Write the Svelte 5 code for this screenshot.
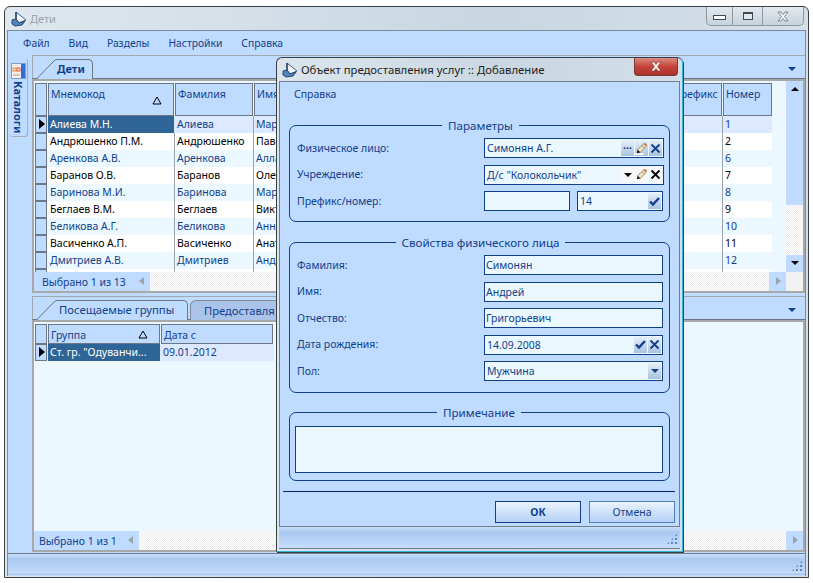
<script>
	const rows = [
		['Алиева М.Н.', 'Алиева', 'Мария', '1'],
		['Андрюшенко П.М.', 'Андрюшенко', 'Павел', '2'],
		['Аренкова А.В.', 'Аренкова', 'Алла', '6'],
		['Баранов О.В.', 'Баранов', 'Олег', '7'],
		['Баринова М.И.', 'Баринова', 'Мария', '8'],
		['Беглаев В.М.', 'Беглаев', 'Виктор', '9'],
		['Беликова А.Г.', 'Беликова', 'Анна', '10'],
		['Васиченко А.П.', 'Васиченко', 'Анатолий', '11'],
		['Дмитриев А.В.', 'Дмитриев', 'Андрей', '12'],
		['', '', '', '']
	];
	const menu = ['Файл', 'Вид', 'Разделы', 'Настройки', 'Справка'];
	const person = [
		['Фамилия:', 'Симонян'],
		['Имя:', 'Андрей'],
		['Отчество:', 'Григорьевич']
	];
</script>

{#snippet logo()}
	<svg class="logo" width="16" height="16" viewBox="0 0 16 16">
		<path d="M5 1 L15 9 L8 12 L5 8 Z" fill="#f2f6fb" stroke="#3d5f8c" />
		<path d="M5 1 V8" stroke="#24406b" stroke-width="1.4" />
		<path d="M1 9 L5 8 L8 12 L14 10 L11 14 L4 15 L1 13 Z" fill="#4f86be" stroke="#2b4468" />
	</svg>
{/snippet}

{#snippet slant()}
	<svg class="slant" width="20" height="20" viewBox="0 0 20 20">
		<path d="M0 20 L16 3 Q18 0 20 0 L20 20 Z" fill="#bfdbff" />
		<path d="M0 19.5 L16 3 Q18 .5 20 .5" fill="none" stroke="#6d7780" />
	</svg>
{/snippet}

{#snippet sort()}
	<svg class="sort" width="10" height="9" viewBox="0 0 10 9">
		<path d="M5 1 L9 8 H1 Z" fill="none" stroke="#000" />
	</svg>
{/snippet}

{#snippet pencil()}
	<svg class="ico" width="15" height="15" viewBox="0 0 15 15">
		<path d="M0 13 H10 V15 H0 Z" fill="#fff" />
		<path d="M3 9 L10 2 L13 5 L6 12 Z" fill="#f1e2c2" stroke="#8a6a3a" stroke-width=".8" />
		<path d="M10 2 L11.5 1 L14 3.5 L13 5 Z" fill="#e0703a" />
		<path d="M8 4 L11 7" stroke="#5f86c0" />
		<path d="M3 9 L6 12 L2 13 Z" fill="#111" />
	</svg>
{/snippet}

{#snippet cross(color)}
	<svg class="ico" width="11" height="11" viewBox="0 0 11 11">
		<path d="M1.5 1.5 L9.5 9.5 M9.5 1.5 L1.5 9.5" stroke={color} stroke-width="1.8" />
	</svg>
{/snippet}

{#snippet check()}
	<svg class="ico" width="11" height="9" viewBox="0 0 11 9">
		<path d="M1 4.5 L4 7.5 L10 1" fill="none" stroke="#123f8c" stroke-width="2.4" />
	</svg>
{/snippet}

<div class="window">
	<header class="titlebar">
		{@render logo()}
		<span class="title">Дети</span>
		<div class="controls">
			<span class="ctl min"><i></i></span>
			<span class="ctl max"><i></i></span>
			<span class="ctl close">
				<svg width="14" height="11" viewBox="0 0 14 11">
					<path d="M2 1 H5 L7 3.5 L9 1 H12 L8.5 5.5 L12 10 H9 L7 7.5 L5 10 H2 L5.5 5.5 Z" fill="#f4f6f8" stroke="#7c858c" />
				</svg>
			</span>
		</div>
	</header>

	<div class="client">
		<nav class="menu">
			{#each menu as item}
				<span>{item}</span>
			{/each}
		</nav>

		<div class="body">
			<aside class="side">
				<div class="side-tab">
					<svg width="15" height="16" viewBox="0 0 15 16">
						<rect x=".5" y=".5" width="14" height="15" fill="#2f6fd6" stroke="#7f9fd0" />
						<rect x="1" y="1" width="9" height="14" fill="#f4efe9" />
						<rect x="2" y="5" width="3" height="3" fill="none" stroke="#f08a2c" />
						<rect x="6" y="5" width="3" height="3" fill="none" stroke="#e8583a" />
						<rect x="2" y="11" width="7" height="2" fill="#d8c4b0" />
					</svg>
					<span class="side-label">Каталоги</span>
				</div>
			</aside>

			<main class="panes">
				<section class="pane top">
					<div class="tabstrip">
						<div class="tab">
							{@render slant()}
							<b>Дети</b>
						</div>
						<span class="strip-arrow"></span>
					</div>
					<div class="sheet">
						<div class="grid-area">
							<div class="grid">
								<div class="hrow tall">
									<span class="ind"></span>
									<span class="hcell c-mnem">Мнемокод{@render sort()}</span>
									<span class="hcell c-fam">Фамилия</span>
									<span class="hcell c-name">Имя</span>
									<span class="hcell c-pref">Префикс</span>
									<span class="hcell c-num">Номер</span>
								</div>
								{#each rows as row, i}
									<div class="row" class:alt={i % 2 === 0} class:first={i === 0}>
										<span class="ind">{#if i === 0}<u></u>{/if}</span>
										<span class="cell c-mnem" class:sel={i === 0}>{row[0]}</span>
										<span class="cell c-fam">{row[1]}</span>
										<span class="cell c-name">{row[2]}</span>
										<span class="cell c-pref"></span>
										<span class="cell c-num">{row[3]}</span>
									</div>
								{/each}
							</div>
							<div class="vscroll">
								<div class="vthumb"><span class="up"></span></div>
								<div class="vtrack"></div>
								<div class="vbtn"><span class="down"></span></div>
							</div>
						</div>
						<div class="footer">
							<div class="count wide">Выбрано 1 из 13<span class="left"></span></div>
							<div class="hatch"></div>
							<div class="hbtn"><span class="right"></span></div>
							<div class="corner"></div>
						</div>
					</div>
				</section>

				<div class="split"></div>

				<section class="pane bottom">
					<div class="tabstrip low">
						<div class="tab long">
							{@render slant()}
							<b>Посещаемые группы</b>
						</div>
						<div class="tab off">Предоставля</div>
						<span class="strip-arrow"></span>
					</div>
					<div class="sheet grow">
						<div class="grid small">
							<div class="hrow">
								<span class="ind"></span>
								<span class="hcell c-group">Группа{@render sort()}</span>
								<span class="hcell c-date">Дата с</span>
							</div>
							<div class="row alt first">
								<span class="ind"><u></u></span>
								<span class="cell c-group sel">Ст. гр. "Одуванчи...</span>
								<span class="cell c-date">09.01.2012</span>
							</div>
						</div>
						<div class="footer">
							<div class="count">Выбрано 1 из 1<span class="left"></span></div>
							<div class="hatch"></div>
							<div class="hbtn"><span class="right"></span></div>
						</div>
					</div>
				</section>
			</main>
		</div>

		<footer class="statusbar">
			<span class="grip"></span>
		</footer>
	</div>

	<div class="dialog">
		<header class="dlg-title">
			{@render logo()}
			<span>Объект предоставления услуг :: Добавление</span>
			<div class="dlg-close">
				<svg width="14" height="11" viewBox="0 0 14 11">
					<path d="M2 1 H5 L7 3.5 L9 1 H12 L8.5 5.5 L12 10 H9 L7 7.5 L5 10 H2 L5.5 5.5 Z" fill="#fff" stroke="#8c3a30" stroke-width=".7" />
				</svg>
			</div>
		</header>
		<div class="dlg-body">
			<div class="dlg-menu">Справка</div>

			<fieldset class="params">
				<legend>Параметры</legend>
				<div class="line">
					<label>Физическое лицо:</label>
					<div class="input">
						<span class="val">Симонян А.Г.</span>
						<span class="btn shade dots">···</span>
						<span class="btn shade">{@render pencil()}</span>
						<span class="btn shade">{@render cross('#123f8c')}</span>
					</div>
				</div>
				<div class="line">
					<label>Учреждение:</label>
					<div class="input">
						<span class="val">Д/с "Колокольчик"</span>
						<span class="btn"><span class="drop dark"></span></span>
						<span class="btn">{@render pencil()}</span>
						<span class="btn">{@render cross('#000')}</span>
					</div>
				</div>
				<div class="line">
					<label>Префикс/номер:</label>
					<div class="split-input">
						<div class="input prefix"></div>
						<div class="input number">
							<span class="val">14</span>
							<span class="btn shade">{@render check()}</span>
						</div>
					</div>
				</div>
			</fieldset>

			<fieldset class="props">
				<legend>Свойства физического лица</legend>
				{#each person as p}
					<div class="line">
						<label>{p[0]}</label>
						<div class="input plain"><span class="val">{p[1]}</span></div>
					</div>
				{/each}
				<div class="line">
					<label>Дата рождения:</label>
					<div class="input">
						<span class="val">14.09.2008</span>
						<span class="btn shade">{@render check()}</span>
						<span class="btn shade">{@render cross('#123f8c')}</span>
					</div>
				</div>
				<div class="line">
					<label>Пол:</label>
					<div class="input">
						<span class="val">Мужчина</span>
						<span class="btn shade"><span class="drop"></span></span>
					</div>
				</div>
			</fieldset>

			<fieldset class="note">
				<legend>Примечание</legend>
				<div class="memo"></div>
			</fieldset>

			<div class="rule"></div>

			<div class="actions">
				<button class="ok">ОК</button>
				<button class="cancel">Отмена</button>
			</div>
		</div>
		<footer class="dlg-status"><span class="grip"></span></footer>
	</div>
</div>

<style>
	:global(body) {
		margin: 0;
		background: #fff;
	}

	.window {
		position: relative;
		box-sizing: border-box;
		width: 805px;
		height: 572px;
		margin: 6px 0 0 4px;
		display: flex;
		flex-direction: column;
		border: 1px solid #3a3f44;
		border-radius: 6px 6px 0 0;
		background: linear-gradient(90deg, #dfe7ee, #c9d7e2 60%, #d5dfe8);
		font: 10.5px "Noto Sans", sans-serif;
		color: #123f8c;
	}

	.titlebar {
		height: 23px;
		flex: none;
		display: flex;
		align-items: center;
		padding-left: 6px;
		gap: 3px;
	}

	.logo {
		flex: none;
	}

	.title {
		color: #9aa4ad;
		font-size: 11px;
	}

	.controls {
		margin-left: auto;
		margin-right: 4px;
		align-self: flex-start;
		display: flex;
		height: 18px;
		border: 1px solid #8d979f;
		border-top: none;
		border-radius: 0 0 5px 5px;
		background: linear-gradient(#e3e9ee, #c7d2db);
	}

	.ctl {
		display: flex;
		align-items: center;
		justify-content: center;
		border-right: 1px solid #8d979f;
		width: 25px;
	}

	.ctl.max {
		width: 29px;
	}

	.ctl.close {
		width: 40px;
		border-right: none;
	}

	.min i {
		width: 11px;
		height: 3px;
		margin-top: 3px;
		border: 1px solid #3d4a55;
		background: #fff;
	}

	.max i {
		width: 8px;
		height: 5px;
		border: 1px solid #3d4a55;
		border-top-width: 2px;
		background: #dfe6ec;
	}

	.client {
		flex: 1;
		min-height: 0;
		margin: 0 2px 1px;
		display: flex;
		flex-direction: column;
		background: #bfdbff;
		border: 1px solid #7b8b99;
		border-bottom: none;
		padding-bottom: 1px;
	}

	.menu {
		height: 24px;
		flex: none;
		display: flex;
		align-items: center;
		gap: 19px;
		padding-left: 15px;
		font-size: 10.3px;
	}

	.body {
		flex: 1;
		min-height: 0;
		display: flex;
	}

	.side {
		width: 24px;
		flex: none;
		padding: 4px 0 0 2px;
		box-sizing: border-box;
	}

	.side-tab {
		width: 18px;
		height: 78px;
		box-sizing: border-box;
		border: 1px solid #a5adb5;
		border-left: none;
		border-top: none;
		border-radius: 3px;
		display: flex;
		flex-direction: column;
		align-items: center;
		padding-top: 4px;
		gap: 2px;
	}

	.side-label {
		writing-mode: vertical-rl;
		font-weight: bold;
		font-size: 11px;
	}

	.panes {
		flex: 1;
		min-width: 0;
		display: flex;
		flex-direction: column;
	}

	.pane {
		display: flex;
		flex-direction: column;
	}

	.pane.top {
		height: 238px;
		flex: none;
	}

	.pane.bottom {
		flex: 1;
		min-height: 0;
		margin-bottom: 1px;
	}

	.tabstrip {
		height: 24px;
		flex: none;
		position: relative;
		display: flex;
		align-items: flex-end;
		box-sizing: border-box;
		border-top: 1px solid #a0a8b0;
		border-bottom: 1px solid #687480;
		border-left: 1px solid #a0a8b0;
		padding-left: 4px;
	}

	.tab {
		height: 20px;
		margin-bottom: -1px;
		display: flex;
		align-items: center;
		position: relative;
		z-index: 1;
	}

	.tab b {
		box-sizing: border-box;
		width: 36px;
		height: 20px;
		line-height: 18px;
		font-size: 11px;
		background: #bfdbff;
		border: 1px solid #6d7780;
		border-left: none;
		border-bottom: none;
		border-radius: 0 5px 0 0;
	}

	.tab.long b {
		width: 131px;
		font-weight: normal;
		padding-left: 2px;
		font-size: 11.3px;
		white-space: nowrap;
	}

	.tab.off {
		box-sizing: border-box;
		width: 200px;
		padding-left: 13px;
		margin-left: 2px;
		background: #a9c4e8;
		border: 1px solid #7d8b99;
		border-bottom: none;
		border-radius: 6px 5px 0 0;
		white-space: nowrap;
		font-size: 11.2px;
	}

	.strip-arrow {
		position: absolute;
		right: 9px;
		top: 11px;
		border: 4px solid transparent;
		border-top: 4px solid #123f8c;
		border-bottom-width: 0;
	}

	.sheet {
		flex: 1;
		min-height: 0;
		display: flex;
		flex-direction: column;
		box-sizing: border-box;
		border: 2px solid #a6a8aa;
		background: #ebf8ff;
	}

	.grid-area {
		flex: 1;
		min-height: 0;
		display: flex;
		overflow: hidden;
	}

	.grid {
		flex: 1;
		min-width: 0;
		overflow: hidden;
		padding: 2px 0 0 1px;
	}

	.hrow {
		height: 20px;
		display: flex;
	}

	.hrow.tall {
		height: 33px;
	}

	.ind {
		box-sizing: border-box;
		width: 12px;
		flex: none;
		margin-right: 1px;
		background: #bfdbff;
		border: 1px solid #6b7784;
		position: relative;
	}

	.ind u {
		position: absolute;
		left: 3px;
		top: 2px;
		border: 5px solid transparent;
		border-left: 6px solid #000;
		border-right: none;
	}

	.hcell {
		box-sizing: border-box;
		flex: none;
		position: relative;
		margin-right: 1px;
		padding: 3px 0 0 2px;
		background: #bfdbff;
		border: 1px solid #6b7784;
		white-space: nowrap;
		overflow: hidden;
	}

	.sort {
		position: absolute;
		right: 11px;
		bottom: 10px;
	}

	.small .sort {
		bottom: 4px;
	}

	.c-mnem {
		width: 126px;
	}

	.c-fam {
		width: 78px;
	}

	.c-name {
		width: 415px;
	}

	.c-pref {
		width: 52px;
	}

	.c-num {
		width: 49px;
	}

	.c-group {
		width: 112px;
	}

	.c-date {
		width: 112px;
	}

	.row {
		height: 17px;
		width: max-content;
		display: flex;
		background: #fff;
		color: #000;
	}

	.row.alt {
		background: #ebf8ff;
		color: #123f8c;
	}

	.row.first {
		background: #dce9ff;
	}

	.cell {
		box-sizing: border-box;
		flex: none;
		height: 17px;
		line-height: 16px;
		padding-left: 2px;
		margin-right: 1px;
		white-space: nowrap;
		overflow: hidden;
		box-shadow: 1px 0 #9aa3ab;
	}

	.cell.sel {
		background: #2f6496;
		color: #fff;
		box-shadow: none;
	}

	.cell.c-num,
	.small .cell.c-date {
		box-shadow: none;
	}

	.vscroll {
		width: 17px;
		flex: none;
		display: flex;
		flex-direction: column;
		background: repeating-conic-gradient(#fff 0 25%, #ececec 0 50%) 0 0 / 2px 2px;
		margin-left: 14px;
	}

	.vthumb {
		height: 124px;
		background: #bfdbff;
		padding-top: 6px;
		display: flex;
		justify-content: center;
		box-sizing: border-box;
	}

	.vtrack {
		flex: 1;
	}

	.vbtn {
		height: 17px;
		background: #bfdbff;
		display: flex;
		justify-content: center;
		padding-top: 6px;
		box-sizing: border-box;
	}

	.up {
		height: 0;
		border: 4px solid transparent;
		border-top: none;
		border-bottom: 4px solid #000;
	}

	.down {
		height: 0;
		border: 4px solid transparent;
		border-bottom: none;
		border-top: 4px solid #000;
	}

	.footer {
		height: 19px;
		flex: none;
		display: flex;
		margin-top: auto;
	}

	.count {
		width: 105px;
		box-sizing: border-box;
		padding-left: 5px;
		background: #bfdbff;
		line-height: 20px;
		position: relative;
		white-space: nowrap;
	}

	.count.wide {
		width: 116px;
		padding-left: 8px;
	}

	.left {
		position: absolute;
		right: 6px;
		top: 5px;
		border: 4px solid transparent;
		border-left: none;
		border-right: 5px solid #9aa3ab;
	}

	.hatch {
		flex: 1;
		background: repeating-conic-gradient(#fff 0 25%, #ececec 0 50%) 0 0 / 2px 2px;
	}

	.hbtn {
		width: 17px;
		background: #bfdbff;
		position: relative;
	}

	.right {
		position: absolute;
		left: 7px;
		top: 5px;
		border: 4px solid transparent;
		border-right: none;
		border-left: 5px solid #9aa3ab;
	}

	.corner {
		width: 17px;
		background: #f2f2f2;
	}

	.split {
		height: 3px;
		flex: none;
	}

	.statusbar {
		height: 22px;
		flex: none;
		position: relative;
		border-top: 1px solid #6f7f90;
		box-sizing: border-box;
		background: linear-gradient(#c8dffc, #a9c9f0 25%, #c3dafa 90%, #a9c0dc);
	}

	.grip {
		position: absolute;
		right: 2px;
		bottom: 3px;
		width: 12px;
		height: 12px;
		background: radial-gradient(circle, #5f85c0 1px, transparent 1.2px) 0 0 / 4px 4px;
		clip-path: polygon(100% 0, 100% 100%, 0 100%);
	}

	.dialog {
		position: absolute;
		z-index: 2;
		left: 271px;
		top: 50px;
		box-sizing: border-box;
		width: 407px;
		height: 495px;
		display: flex;
		flex-direction: column;
		border: 1px solid #3a3f44;
		border-right-color: #2fb4d8;
		border-bottom-color: #2fb4d8;
		border-radius: 6px 6px 0 0;
		background: linear-gradient(90deg, #dce5ec, #c9d7e2 60%, #d5dfe8);
		box-shadow: 1px 1px 0 #3a3f44;
	}

	.dlg-title {
		height: 23px;
		flex: none;
		position: relative;
		display: flex;
		align-items: center;
		gap: 3px;
		padding-left: 5px;
		color: #222;
		font-size: 11.3px;
	}

	.dlg-close {
		position: absolute;
		right: 4px;
		top: 0;
		width: 44px;
		height: 18px;
		display: flex;
		align-items: center;
		justify-content: center;
		border: 1px solid #7b3a33;
		border-top: none;
		border-radius: 0 0 4px 4px;
		box-sizing: border-box;
		background: linear-gradient(#d98c80, #c5443a 50%, #a8332a);
	}

	.dlg-body {
		flex: 1;
		min-height: 0;
		margin: 0 2px;
		padding: 0 9px;
		display: flex;
		flex-direction: column;
		background: #bfdbff;
		border: 1px solid #6f7f90;
		border-bottom: none;
	}

	.dlg-menu {
		height: 26px;
		line-height: 25px;
		padding-left: 5px;
		flex: none;
	}

	fieldset {
		margin: 0;
		padding: 0 5px 0 7px;
		border: 1px solid #123f8c;
		border-radius: 7px;
		min-width: 0;
		flex: none;
		box-sizing: border-box;
	}

	legend {
		margin: 0 auto;
		padding: 0 6px;
		line-height: 13px;
		text-align: center;
		font-size: 11.6px;
	}

	.params {
		height: 103px;
		margin-top: 11px;
		padding-top: 6px;
	}

	.props {
		height: 157px;
		margin-top: 14px;
		padding-top: 6px;
	}

	.note {
		height: 75px;
		margin-top: 13px;
		padding: 7px 6px 0 5px;
	}

	.line {
		display: flex;
		align-items: center;
		height: 20px;
		margin-bottom: 6.5px;
	}

	.line label {
		width: 187px;
		flex: none;
		padding-bottom: 1px;
	}

	.input {
		flex: 1;
		height: 100%;
		min-width: 0;
		box-sizing: border-box;
		display: flex;
		align-items: center;
		gap: 1px;
		padding-right: 1px;
		border: 1px solid #123f8c;
		background: #ebf8ff;
	}

	.props .input {
		margin-right: 1px;
	}

	.val {
		flex: 1;
		padding-left: 2px;
		white-space: nowrap;
	}

	.input.plain .val {
		padding-left: 1px;
	}

	.btn {
		width: 13px;
		height: 16px;
		flex: none;
		display: flex;
		align-items: center;
		justify-content: center;
		background: #f7f7f7;
	}

	.btn.shade {
		background: linear-gradient(#e6f0fa, #a9c3de);
	}

	.dots {
		font-weight: bold;
		line-height: 14px;
	}

	.drop {
		border: 4px solid transparent;
		border-bottom: none;
		border-top: 4px solid #123f8c;
	}

	.drop.dark {
		border-top-color: #000;
	}

	.split-input {
		flex: 1;
		min-width: 0;
		height: 100%;
		display: flex;
		gap: 7px;
		margin-right: 1px;
	}

	.prefix {
		flex: none;
		width: 86px;
	}

	.memo {
		height: 47px;
		box-sizing: border-box;
		border: 1px solid #123f8c;
		background: #ebf8ff;
	}

	.rule {
		height: 1px;
		flex: none;
		margin: 10px -5px 0 -6px;
		background: #0a1f6e;
	}

	.actions {
		display: flex;
		justify-content: flex-end;
		gap: 8px;
		margin: 9px -5px 0 0;
	}

	button {
		box-sizing: border-box;
		width: 86px;
		height: 22px;
		padding: 0;
		font: inherit;
		color: #123f8c;
		border: 1px solid #123f8c;
		background: linear-gradient(#e9f3ff, #b5d1f5);
	}

	.ok {
		font-weight: bold;
	}

	.cancel {
		border-color: #5580b5;
	}

	.dlg-status {
		height: 21px;
		flex: none;
		margin: 0 2px 2px;
		position: relative;
		border-top: 1px solid #6f7f90;
		border-bottom: 1px solid #6f7f90;
		background: linear-gradient(#c8dffc, #a9c9f0 25%, #c3dafa 90%);
	}
</style>
